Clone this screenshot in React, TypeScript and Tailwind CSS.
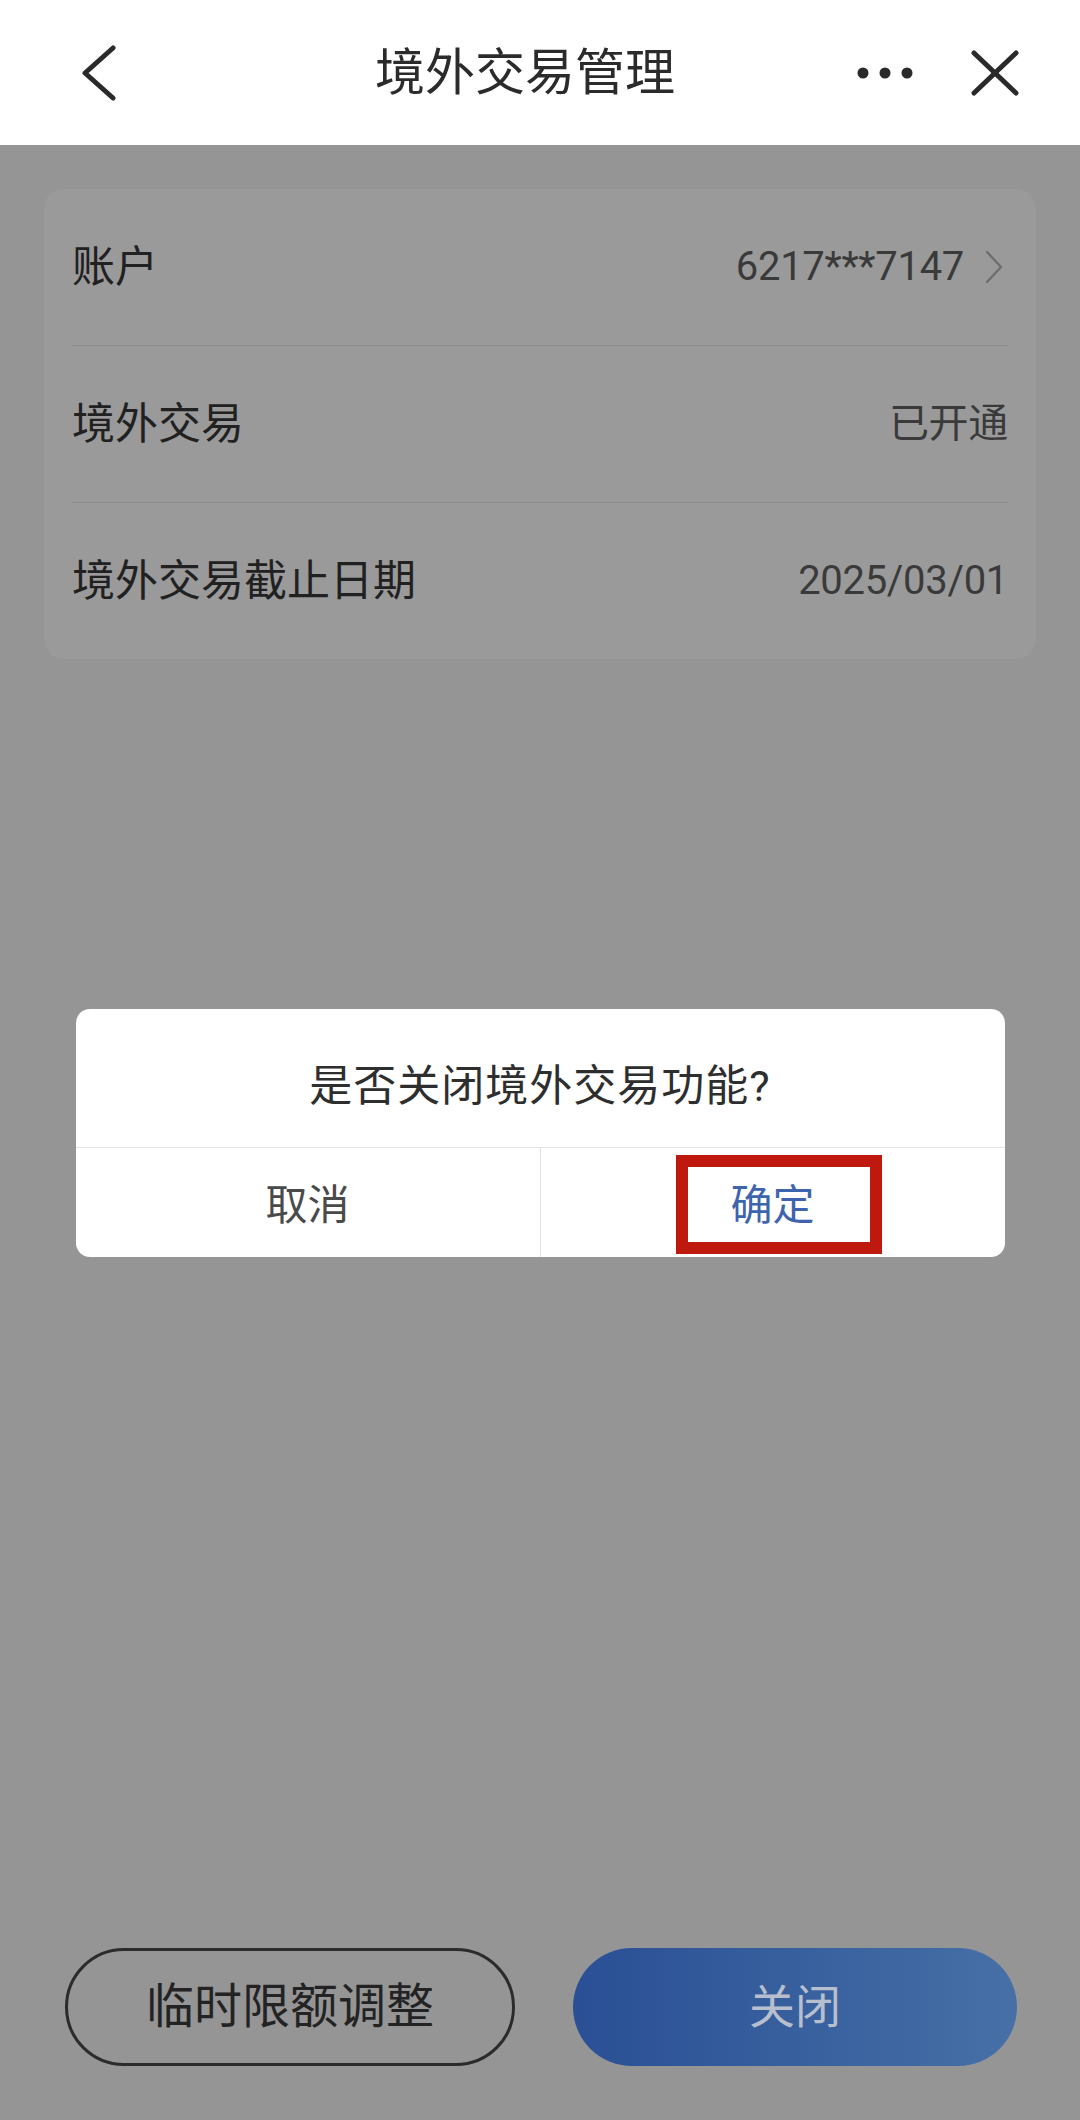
import React from 'react';

const rows = [
  { label: '账户', value: '6217***7147', arrow: true },
  { label: '境外交易', value: '已开通' },
  { label: '境外交易截止日期', value: '2025/03/01' },
];

const font = { fontFamily: 'Roboto, "Noto Sans CJK SC", sans-serif' };

function Header() {
  return (
    <header className="h-[145px] bg-white flex items-center shrink-0">
      <div className="w-[200px] pl-[81px] flex items-center">
        <svg width="36" height="56" viewBox="0 0 36 56" fill="none">
          <polyline points="32,3 4,28 32,53" stroke="#2a2a2a" strokeWidth="5" strokeLinecap="round" strokeLinejoin="round" />
        </svg>
      </div>
      <h1 className="flex-1 text-center text-[50px] text-[#2b2b2b] leading-none">境外交易管理</h1>
      <div className="w-[230px] pr-[61px] flex items-center justify-end gap-[58px]">
        <svg width="56" height="12" viewBox="0 0 56 12">
          <circle cx="6" cy="6" r="5.5" fill="#2a2a2a" />
          <circle cx="28" cy="6" r="5.5" fill="#2a2a2a" />
          <circle cx="50" cy="6" r="5.5" fill="#2a2a2a" />
        </svg>
        <svg width="48" height="46" viewBox="0 0 48 46" fill="none">
          <line x1="3" y1="3" x2="45" y2="43" stroke="#2a2a2a" strokeWidth="5" strokeLinecap="round" />
          <line x1="45" y1="3" x2="3" y2="43" stroke="#2a2a2a" strokeWidth="5" strokeLinecap="round" />
        </svg>
      </div>
    </header>
  );
}

function InfoCard() {
  return (
    <div className="mx-[44px] mt-[44px] rounded-[20px] bg-[#9a9a9a] px-[28px]">
      {rows.map((row, i) => (
        <div key={row.label}>
          {i > 0 && <div className="h-px bg-[#8c8c8c]" />}
          <div className="h-[156px] flex items-center justify-between">
            <span className="text-[43px] text-[#212121] leading-none">{row.label}</span>
            <span className="flex items-center gap-[20px]">
              <span className="text-[40px] text-[#3a3a3a] leading-none tracking-[-0.3px]">{row.value}</span>
              {row.arrow && (
                <svg width="20" height="34" viewBox="0 0 20 34" fill="none" className="mr-[4px]">
                  <polyline points="3,2 17,17 3,32" stroke="#6c6c6c" strokeWidth="2.2" strokeLinecap="round" strokeLinejoin="round" />
                </svg>
              )}
            </span>
          </div>
        </div>
      ))}
    </div>
  );
}

function ConfirmDialog() {
  return (
    <div className="absolute left-0 right-0 top-[145px] bottom-0 flex items-center justify-center">
      <div className="w-[929px] bg-white rounded-[14px] overflow-hidden">
        <div className="h-[138px] pt-[18px] flex items-center justify-center text-[43px] text-[#2e2e2e] leading-none tracking-[1px]">
          是否关闭境外交易功能?
        </div>
        <div className="h-px bg-[#e3e3e3]" />
        <div className="h-[109px] flex">
          <button className="flex-1 flex items-center justify-center pt-[7px] text-[42px] text-[#4a4a4a] leading-none">
            取消
          </button>
          <div className="w-px bg-[#e3e3e3]" />
          <div className="relative flex-1 flex items-center justify-center pt-[7px]">
            <button className="text-[42px] text-[#3d64ad] leading-none">确定</button>
            <div className="absolute left-[135px] top-[7px] w-[206px] h-[99px] border-[12px] border-[#bf180e]" />
          </div>
        </div>
      </div>
    </div>
  );
}

export default function App() {
  return (
    <div className="relative w-[1080px] h-[2120px] bg-[#959595] flex flex-col overflow-hidden" style={font}>
      <Header />
      <div className="flex-1">
        <InfoCard />
      </div>
      <div className="flex gap-[58px] pl-[65px] pr-[63px] pb-[54px]">
        <button className="flex-1 h-[118px] rounded-full border-[3px] border-[#2b2b2b] text-[48px] text-[#232323] leading-none">
          临时限额调整
        </button>
        <button className="flex-1 h-[118px] rounded-full bg-linear-to-r from-[#2a4f95] to-[#4670a6] text-[46px] text-[#b7bfce] leading-none">
          关闭
        </button>
      </div>
      <ConfirmDialog />
    </div>
  );
}
